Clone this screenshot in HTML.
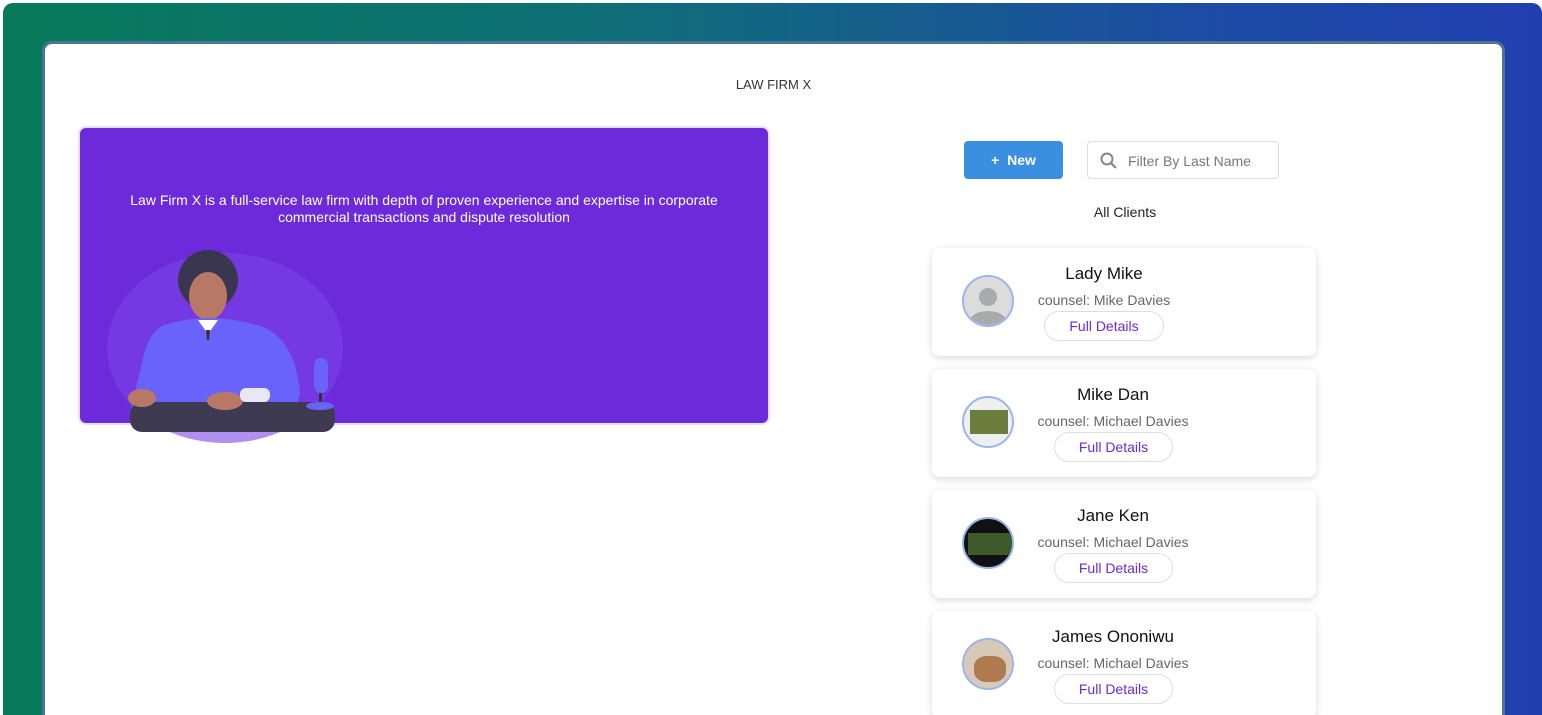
<!DOCTYPE html>
<html style="width:1542px;height:715px;overflow:hidden"><head><style>
*{margin:0;padding:0;box-sizing:border-box}
body{width:1542px;height:715px;overflow:hidden;background:#fff;font-family:"Liberation Sans",sans-serif;position:relative}
.clip{position:absolute;left:0;top:0;width:1542px;height:715px;overflow:hidden}
.outer{position:absolute;left:3px;top:3px;width:1539px;height:760px;border-radius:10px;background:linear-gradient(90deg,#077a5a 0%,#0f6e78 40%,#1d4aa6 80%,#2040b0 100%)}
.inner{position:absolute;left:42px;top:41px;width:1463px;height:720px;background:#fff;border-radius:10px;border:3px solid #4d7396}
.title{position:absolute;left:0;width:100%;top:33px;text-align:center;font-size:13px;color:#333}
.hero{position:absolute;left:33px;top:82px;width:692px;height:299px;background:#6d2adb;border-radius:8px;border:2px solid #e6e0f6}
.hero p{position:absolute;left:0;width:100%;top:64px;text-align:center;color:#fff;font-size:14px;line-height:17px}
.card{position:absolute;left:887px;width:384px;height:108px;background:#fff;border-radius:8px;box-shadow:0 2px 8px rgba(0,0,0,.15)}
.av{position:absolute;left:30px;top:27px;width:52px;height:52px;border-radius:50%;border:2px solid #9bb5ee;overflow:hidden;background:#dcdcdc}
.name{position:absolute;top:16px;font-size:17px;color:#111;text-align:center;width:200px}
.cn{position:absolute;top:44px;font-size:14px;color:#666;text-align:center;width:200px}
.btn{position:absolute;top:63px;height:30px;border:1px solid #ddd;border-radius:15px;color:#6d2adb;font-size:14px;text-align:center;line-height:28px}
</style></head><body>
<div class="clip">
<div class="outer"></div>
<div class="inner">
<div class="title">LAW FIRM X</div>
<div class="hero"><p>Law Firm X is a full-service law firm with depth of proven experience and expertise in corporate<br>commercial transactions and dispute resolution</p>
<svg style="position:absolute;left:20px;top:110px;overflow:visible" width="250" height="210" viewBox="0 0 250 210">
<ellipse cx="125" cy="110" rx="118" ry="95" fill="#7a45e6" opacity=".6"/>
<circle cx="108" cy="42" r="30" fill="#3a3650"/>
<ellipse cx="108" cy="58" rx="19" ry="24" fill="#b97766"/>
<path d="M62 88 Q108 72 160 88 Q195 100 200 155 L195 175 L30 175 L42 125 Q48 95 62 88Z" fill="#6a63fb"/>
<path d="M98 82 L108 96 L118 82Z" fill="#fff"/><path d="M106 92 L110 92 L109 102 L107 102Z" fill="#333"/>
<rect x="30" y="164" width="205" height="30" rx="12" fill="#3d3a52"/>
<ellipse cx="42" cy="160" rx="14" ry="9" fill="#b97766"/>
<ellipse cx="125" cy="163" rx="18" ry="9" fill="#b97766"/>
<rect x="140" y="150" width="30" height="14" rx="6" fill="#e8e8f4"/>
<rect x="214" y="120" width="14" height="35" rx="7" fill="#6a63fb"/>
<rect x="219" y="155" width="3" height="12" fill="#333"/>
<ellipse cx="220" cy="168" rx="14" ry="4" fill="#6a63fb"/>
</svg>
</div>
<div style="position:absolute;left:919px;top:97px;width:99px;height:38px;background:#3a8fe0;border-radius:4px;color:#fff;font-weight:bold;font-size:14px;text-align:center;line-height:38px">+&nbsp; New</div>
<div style="position:absolute;left:1042px;top:97px;width:192px;height:38px;border:1px solid #ddd;border-radius:4px">
<svg style="position:absolute;left:12px;top:10px" width="18" height="18" viewBox="0 0 18 18"><circle cx="7" cy="7" r="5.5" fill="none" stroke="#888" stroke-width="2"/><path d="M11 11L16 16" stroke="#888" stroke-width="2.2"/></svg>
<span style="position:absolute;left:40px;top:11px;font-size:14px;color:#777">Filter By Last Name</span></div>
<div style="position:absolute;left:1000px;top:160px;width:160px;text-align:center;font-size:14px;color:#222">All Clients</div>

<div class="card" style="top:204px"><div class="av"><svg width="52" height="52" viewBox="0 0 52 52"><circle cx="24" cy="20" r="9" fill="#a9aaab"/><ellipse cx="24" cy="44" rx="18" ry="10" fill="#a9aaab"/></svg></div>
<div class="name" style="left:72px">Lady Mike</div><div class="cn" style="left:72px">counsel: Mike Davies</div><div class="btn" style="left:112px;width:120px">Full Details</div></div>

<div class="card" style="top:325px"><div class="av" style="background:#eef0f0"><div style="margin:12px 6px;width:38px;height:24px;background:#6b7d3c"></div></div>
<div class="name" style="left:81px">Mike Dan</div><div class="cn" style="left:81px">counsel: Michael Davies</div><div class="btn" style="left:122px;width:119px">Full Details</div></div>

<div class="card" style="top:446px"><div class="av" style="background:#111"><div style="margin:14px 4px;width:44px;height:22px;background:#3f5a2a"></div></div>
<div class="name" style="left:81px">Jane Ken</div><div class="cn" style="left:81px">counsel: Michael Davies</div><div class="btn" style="left:122px;width:119px">Full Details</div></div>

<div class="card" style="top:567px"><div class="av" style="background:#d8c8b8"><div style="margin:16px 10px;width:32px;height:26px;background:#b07a50;border-radius:40%"></div></div>
<div class="name" style="left:81px">James Ononiwu</div><div class="cn" style="left:81px">counsel: Michael Davies</div><div class="btn" style="left:122px;width:119px">Full Details</div></div>
</div>
</div>
</body></html>
